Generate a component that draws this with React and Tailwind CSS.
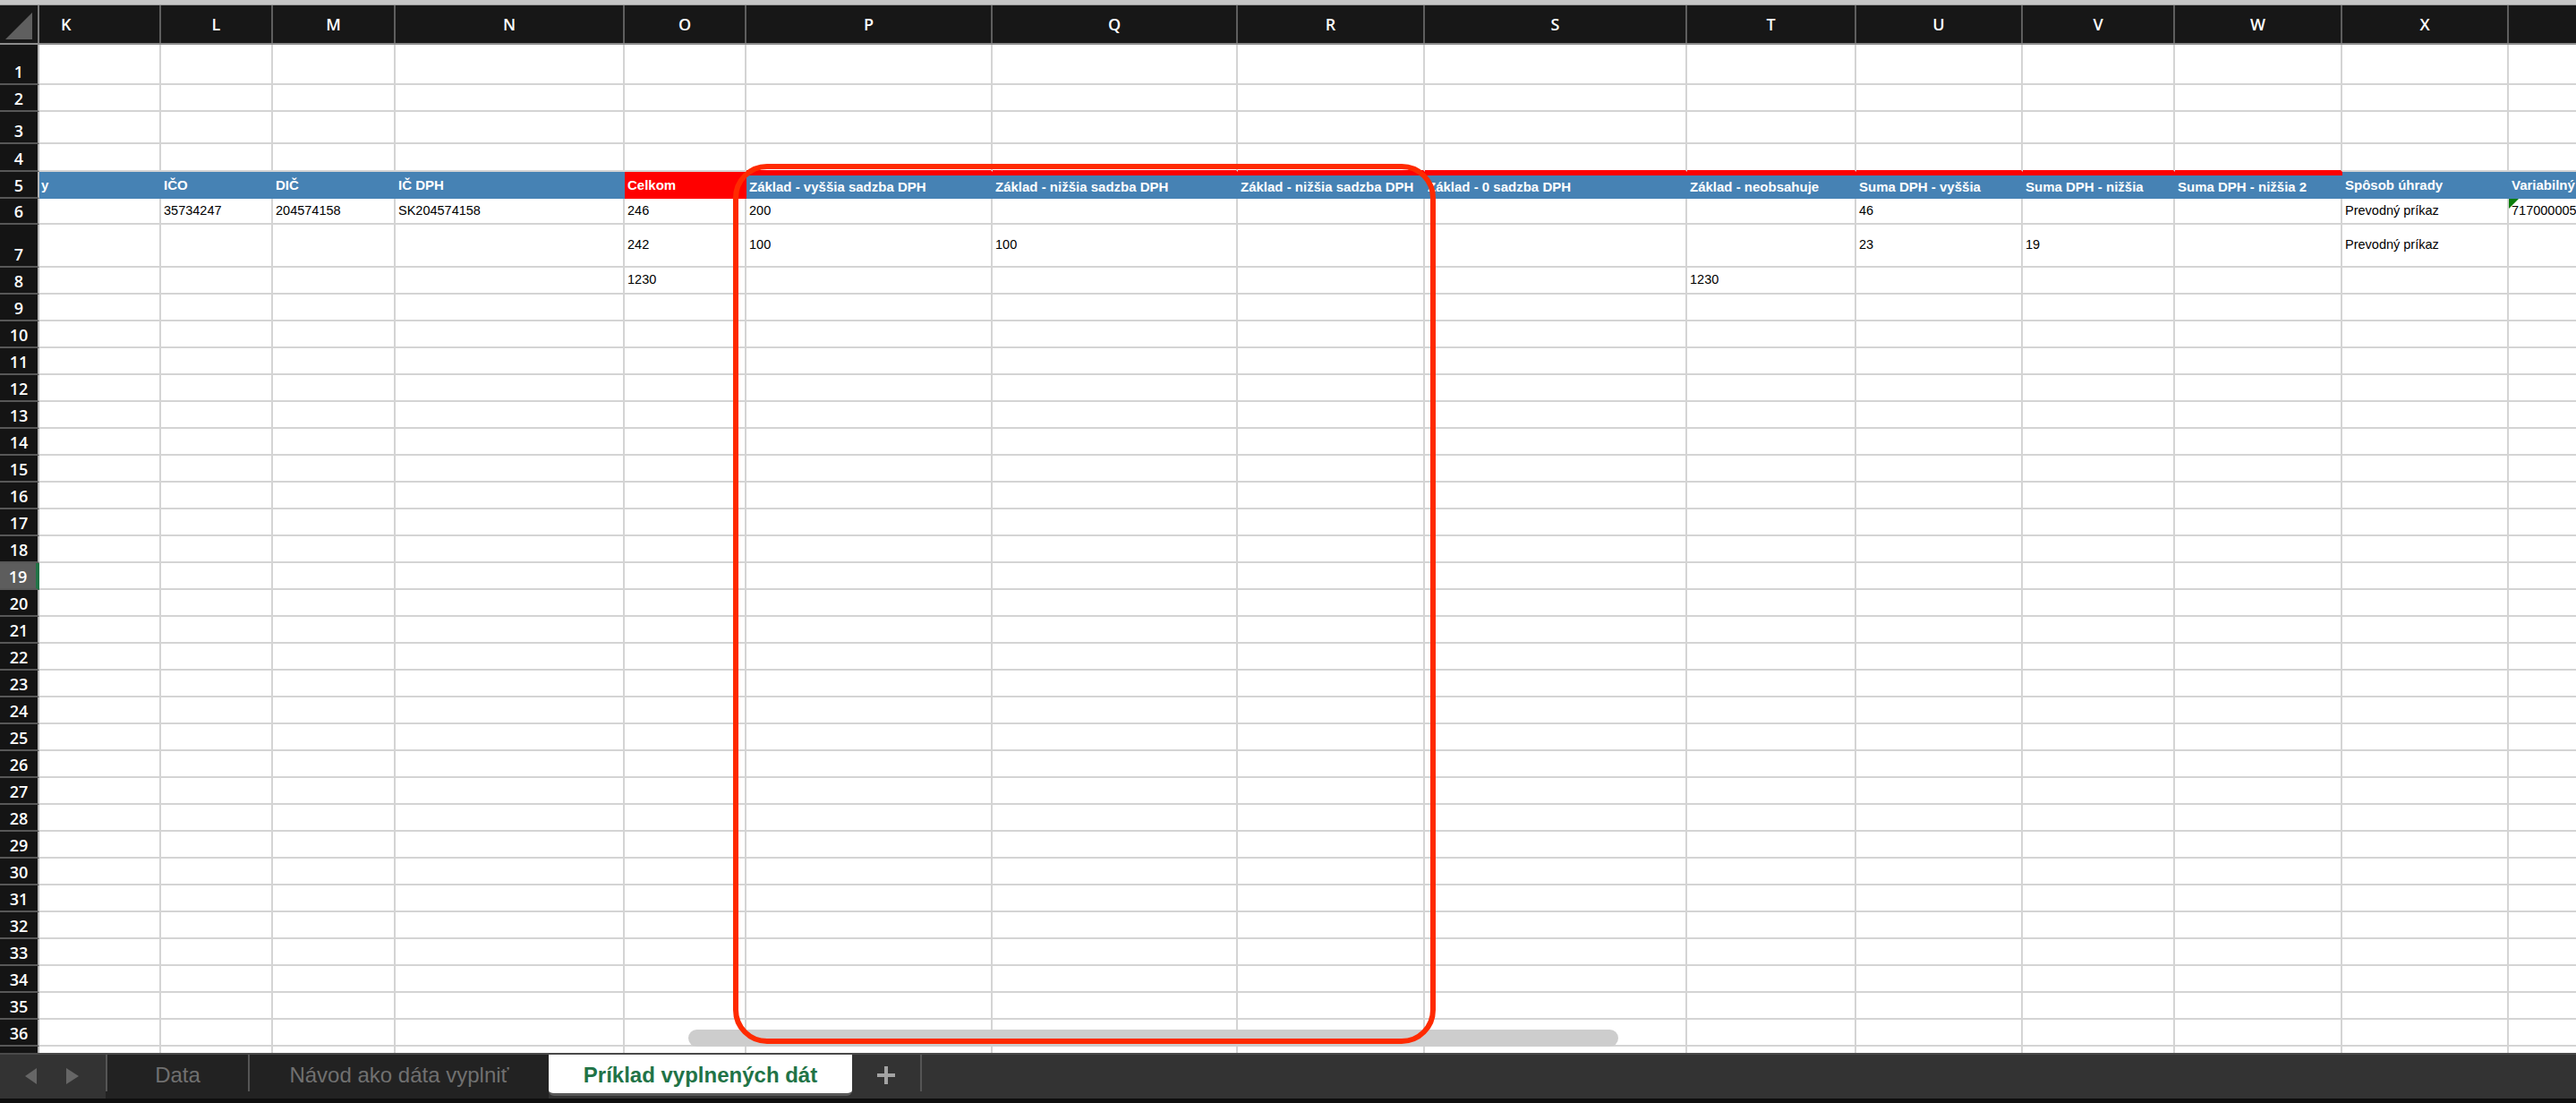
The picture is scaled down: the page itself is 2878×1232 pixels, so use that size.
import React from 'react';

// column letter + literal width class (widths include the 2px grid line)
const cols = [
  ['K', 'w-[136px]'],
  ['L', 'w-[125px]'],
  ['M', 'w-[137px]'],
  ['N', 'w-[256px]'],
  ['O', 'w-[136px]'],
  ['P', 'w-[275px]'],
  ['Q', 'w-[274px]'],
  ['R', 'w-[209px]'],
  ['S', 'w-[293px]'],
  ['T', 'w-[189px]'],
  ['U', 'w-[186px]'],
  ['V', 'w-[170px]'],
  ['W', 'w-[187px]'],
  ['X', 'w-[186px]'],
  ['Y', 'w-[200px]'],
];

const redTop = ['P', 'Q', 'R', 'S', 'T', 'U', 'V', 'W'];

const head = {
  K: 'y',
  L: 'IČO',
  M: 'DIČ',
  N: 'IČ DPH',
  O: 'Celkom',
  P: 'Základ - vyššia sadzba DPH',
  Q: 'Základ - nižšia sadzba DPH',
  R: 'Základ - nižšia sadzba DPH',
  S: 'Základ - 0 sadzba DPH',
  T: 'Základ - neobsahuje',
  U: 'Suma DPH - vyššia',
  V: 'Suma DPH - nižšia',
  W: 'Suma DPH - nižšia 2',
  X: 'Spôsob úhrady',
  Y: 'Variabilný symbol',
};

const data = {
  6: { L: '35734247', M: '204574158', N: 'SK204574158', O: '246', P: '200', U: '46', X: 'Prevodný príkaz', Y: '7170000050' },
  7: { O: '242', P: '100', Q: '100', U: '23', V: '19', X: 'Prevodný príkaz' },
  8: { O: '1230', T: '1230' },
};

const rowHeights = {
  1: 'h-[45px]',
  2: 'h-[30px]',
  3: 'h-[36px]',
  4: 'h-[31px]',
  5: 'h-[30px]',
  6: 'h-[29px]',
  7: 'h-[48px]',
  8: 'h-[30px]',
};

function RowHeader({ n }) {
  const selected = n === 19;
  return (
    <div
      className={`w-[44px] shrink-0 h-full flex items-end justify-center pb-[4px] border-b-2 border-b-[#575757] font-['Open_Sans',sans-serif] font-semibold text-[18px] leading-none text-white ${
        selected ? 'bg-[#5d5d5d] border-r-4 border-r-[#217346]' : 'bg-[#141414] border-r-2 border-r-[#b8b8b8]'
      }`}
    >
      {n}
    </div>
  );
}

function HeaderRow() {
  return (
    <div className="flex h-[30px] shrink-0">
      <RowHeader n={5} />
      {cols.map(([c, w]) => {
        const isRed = c === 'O';
        const top = redTop.includes(c);
        return (
          <div
            key={c}
            className={`${w} shrink-0 h-full flex items-center whitespace-nowrap font-bold text-[15px] text-white ${
              isRed ? 'bg-[#ff0000]' : 'bg-[#4682b4]'
            } ${top ? 'border-t-4 border-t-[#ff0000]' : ''} ${c === 'K' ? 'pl-[2px]' : 'pl-[3px]'}`}
          >
            {head[c]}
          </div>
        );
      })}
    </div>
  );
}

function Row({ n }) {
  const h = rowHeights[n] || 'h-[30px]';
  const cells = data[n] || {};
  return (
    <div className={`flex ${h} shrink-0`}>
      <RowHeader n={n} />
      {cols.map(([c, w]) => (
        <div
          key={c}
          className={`${w} shrink-0 h-full relative flex items-center pl-[3px] whitespace-nowrap text-[14.5px] text-black border-r-2 border-r-[#d4d4d4] border-b-2 ${
            n === 4 && redTop.includes(c) ? 'border-b-[#ff0000]' : 'border-b-[#d4d4d4]'
          }`}
        >
          {n === 6 && c === 'Y' && (
            <span className="absolute top-0 left-0 w-0 h-0 border-t-[11px] border-t-[#0b7d0b] border-r-[11px] border-r-transparent" />
          )}
          {cells[c]}
        </div>
      ))}
    </div>
  );
}

function ColumnHeader() {
  return (
    <div className="flex h-[44px] shrink-0 bg-[#171717] border-b-2 border-b-[#8c8c8c]">
      <div className="w-[44px] shrink-0 h-full border-r-2 border-r-[#7a7a7a] flex items-end justify-end pr-[6px] pb-[4px]">
        <svg width="30" height="30" viewBox="0 0 30 30">
          <polygon points="30,0 30,30 0,30" fill="#5f5f5f" />
        </svg>
      </div>
      {cols.map(([c, w]) => (
        <div
          key={c}
          className={`${w} shrink-0 h-full flex items-center border-r-2 border-r-[#5e5e5e] font-['Open_Sans',sans-serif] font-semibold text-[18px] text-white ${
            c === 'K' ? 'justify-start pl-[24px]' : 'justify-center'
          }`}
        >
          {c === 'Y' ? '' : c}
        </div>
      ))}
    </div>
  );
}

function TabBar() {
  return (
    <div className="h-[56px] shrink-0 flex flex-col bg-[#333333] font-['Liberation_Sans',Arial,sans-serif]">
      <div className="h-[2px] bg-[#4a4a4a]" />
      <div className="flex-1 flex">
        <div className="w-[118px] shrink-0 flex items-center pl-[28px] gap-[33px] pb-[2px]">
          <svg width="13" height="18" viewBox="0 0 13 18">
            <polygon points="13,0 13,18 0,9" fill="#666666" />
          </svg>
          <svg width="14" height="18" viewBox="0 0 14 18">
            <polygon points="0,0 0,18 14,9" fill="#666666" />
          </svg>
        </div>
        <div className="flex bg-[#222222]">
          <div className="w-[2px] h-[41px] bg-[#555555]" />
          <div className="w-[157px] flex items-center justify-center text-[24px] text-[#707070] pb-[4px]">Data</div>
          <div className="w-[2px] h-[41px] bg-[#555555]" />
          <div className="w-[334px] flex items-center justify-center text-[24px] text-[#707070] pb-[4px]">
            Návod ako dáta vyplniť
          </div>
        </div>
        <div className="w-[339px] shrink-0">
          <div className="h-[46px] bg-white rounded-b-[6px] border-b-[3px] border-b-[#5a5a5a] flex items-center justify-center font-bold text-[24px] text-[#217346] pt-[2px]">
            Príklad vyplnených dát
          </div>
        </div>
        <div className="w-[76px] shrink-0 flex items-center justify-center pb-[4px]">
          <svg width="20" height="20" viewBox="0 0 20 20">
            <rect x="8" y="0" width="4" height="20" fill="#a3a3a3" />
            <rect x="0" y="8" width="20" height="4" fill="#a3a3a3" />
          </svg>
        </div>
        <div className="w-[2px] h-[41px] bg-[#555555]" />
      </div>
      <div className="h-[5px] bg-[#0e0e0e]" />
    </div>
  );
}

export default function App() {
  const before = [1, 2, 3, 4];
  const after = [];
  for (let i = 6; i <= 36; i++) after.push(i);

  return (
    <div className="w-[2878px] h-[1232px] overflow-hidden bg-white relative flex flex-col font-['Liberation_Sans',Arial,sans-serif]">
      <div className="h-[6px] shrink-0 bg-[#c6c6c6] border-b border-b-[#9a9a9a]" />
      <ColumnHeader />
      {before.map((n) => (
        <Row key={n} n={n} />
      ))}
      <HeaderRow />
      {after.map((n) => (
        <Row key={n} n={n} />
      ))}
      {/* partially visible row 37 */}
      <div className="flex h-[7px] shrink-0 overflow-hidden">
        <div className="w-[44px] shrink-0 h-full bg-[#141414] border-r-2 border-r-[#b8b8b8]" />
        {cols.map(([c, w]) => (
          <div key={c} className={`${w} shrink-0 h-full border-r-2 border-r-[#d4d4d4]`} />
        ))}
      </div>
      <TabBar />

      {/* horizontal scroll thumb */}
      <div className="absolute left-[769px] top-[1150px] w-[1039px] h-[19px] rounded-full bg-[#cdcdcd]" />
      {/* red annotation frame */}
      <div className="absolute left-[819px] top-[183px] w-[785px] h-[983px] border-[6px] border-[#ff2a00] rounded-[38px]" />
    </div>
  );
}
